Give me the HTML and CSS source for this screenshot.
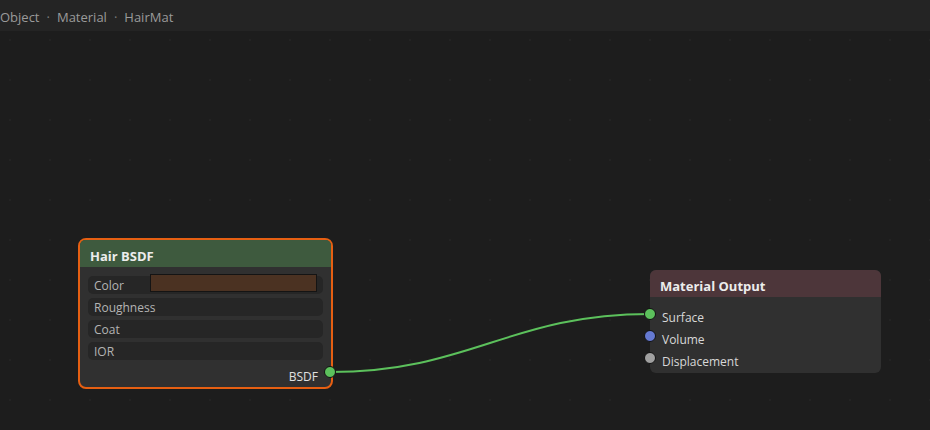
FILE: index.html
```html
<!DOCTYPE html>
<html lang="en">
<head>
    <meta charset="UTF-8">
    <title>Node Editor - HairMat</title>
    <link rel="stylesheet" href="styles.css">
</head>
<body>
    <div class="breadcrumb">
        <span>Object</span><span class="sep">·</span><span>Material</span><span class="sep">·</span><span>HairMat</span>
    </div>

    <div class="canvas">
        <svg class="wires" width="930" height="399" viewBox="0 0 930 399">
            <!-- BSDF -> Surface -->
            <path d="M330 341 C 470 341, 510 283, 650 283" fill="none" stroke="#5cc15c" stroke-width="2"/>
        </svg>

        <div class="node node-hair selected">
            <div class="node-header">Hair BSDF</div>
            <div class="node-body">
                <div class="field"><span>Color</span><span class="swatch"></span></div>
                <div class="field"><span>Roughness</span></div>
                <div class="field"><span>Coat</span></div>
                <div class="field"><span>IOR</span></div>
                <div class="output-row">
                    BSDF
                    <span class="socket socket-shader socket-out"></span>
                </div>
            </div>
        </div>

        <div class="node node-output">
            <div class="node-header">Material Output</div>
            <div class="node-body">
                <div class="input-row"><span class="socket socket-shader socket-in"></span>Surface</div>
                <div class="input-row"><span class="socket socket-volume socket-in"></span>Volume</div>
                <div class="input-row"><span class="socket socket-vector socket-in"></span>Displacement</div>
            </div>
        </div>
    </div>
</body>
</html>
```

FILE: styles.css
```css
* {
    margin: 0;
    padding: 0;
    box-sizing: border-box;
}

body {
    font-family: 'Open Sans', 'Noto Sans', sans-serif;
    background: #1d1d1d;
    color: #d8d8d8;
    width: 930px;
    height: 430px;
    overflow: hidden;
}

.breadcrumb {
    height: 31px;
    background: #242424;
    color: #9a9a9a;
    font-size: 13px;
    display: flex;
    gap: 7px;
    padding-top: 3px;
    line-height: 29px;
}

.breadcrumb .sep {
    color: #7a7a7a;
}

.canvas {
    position: relative;
    height: 399px;
    background-color: #1d1d1d;
    background-image: radial-gradient(circle, #232323 0.8px, transparent 1px);
    background-size: 40px 40px;
    background-position: -10px -11px;
}

.wires {
    position: absolute;
    left: 0;
    top: 0;
}

.node {
    position: absolute;
    background: #303030;
    border-radius: 6px;
}

.node-header {
    height: 27px;
    line-height: 27px;
    padding-top: 3px;
    padding-left: 10px;
    font-size: 13px;
    font-weight: 700;
    color: #ececec;
    border-radius: 6px 6px 0 0;
}

.node-hair {
    left: 78px;
    top: 207px;
    width: 255px;
    height: 151px;
    border: 2px solid #e65f12;
    border-radius: 8px;
}

.node-hair .node-header {
    background: #3e5a3e;
    border-radius: 5px 5px 0 0;
}

.node-hair .node-body {
    padding: 9px 8px 0 8px;
    display: flex;
    flex-direction: column;
    gap: 4px;
}

.field {
    height: 18px;
    background: #262626;
    border-radius: 5px;
    font-size: 12px;
    line-height: 18px;
    padding-top: 1px;
    color: #b4b4b4;
    padding-left: 6px;
    position: relative;
}

.swatch {
    position: absolute;
    left: 62px;
    top: -2px;
    width: 167px;
    height: 18px;
    background: #4b3222;
    border: 1px solid #141414;
}

.output-row {
    position: relative;
    height: 22px;
    margin-top: 2px;
    font-size: 12px;
    line-height: 22px;
    text-align: right;
    padding-right: 5px;
    color: #e0e0e0;
}

.node-output {
    left: 650px;
    top: 239px;
    width: 231px;
    height: 103px;
}

.node-output .node-header {
    background: #4d363a;
}

.node-output .node-body {
    padding-top: 9px;
}

.input-row {
    position: relative;
    height: 22px;
    line-height: 22px;
    padding-top: 1px;
    font-size: 12px;
    padding-left: 12px;
    color: #d8d8d8;
}

.socket {
    position: absolute;
    width: 12px;
    height: 12px;
    border-radius: 50%;
    border: 1px solid #111;
}

.socket-in {
    left: -6px;
    top: 2px;
}

.socket-out {
    right: -13px;
    top: 0;
}

.socket-shader {
    background: #5cc15c;
}

.socket-volume {
    background: #6579d1;
}

.socket-vector {
    background: #a0a0a0;
}
```
